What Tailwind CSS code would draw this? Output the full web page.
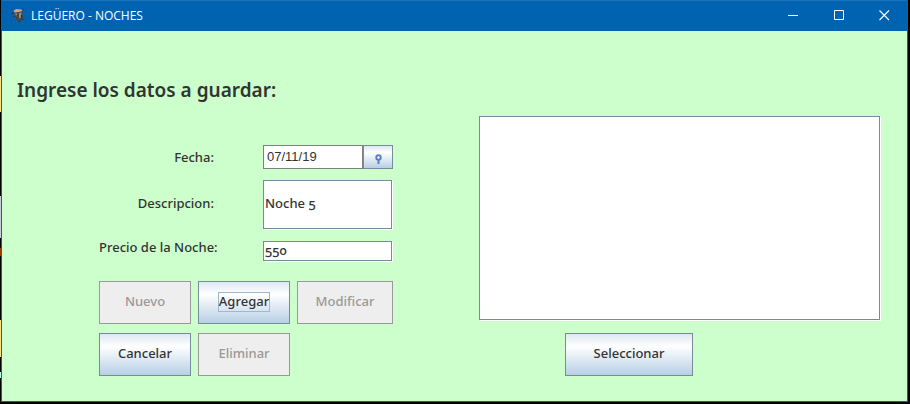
<!DOCTYPE html>
<html lang="es">
<head>
<meta charset="utf-8">
<meta name="viewport" content="width=device-width, initial-scale=1">
<title>LEGÜERO - NOCHES</title>
<script src="https://cdn.jsdelivr.net/npm/@tailwindcss/browser@4"></script>
</head>
<body class="min-h-screen flex bg-black pr-[2px] pb-[2px] font-['Noto_Sans','Open_Sans',sans-serif] text-[#333333]">
<!-- Desktop strip seen beside the window -->
<div class="w-px shrink-0 bg-[linear-gradient(to_bottom,#000_76px,#ffe08a_76px,#ffe08a_112px,#000_112px,#000_196px,#c8cedc_196px,#c8cedc_238px,#000_238px,#000_248px,#a04000_248px,#a04000_256px,#000_256px,#000_320px,#ffe08a_320px,#ffe08a_357px,#000_357px,#000_372px,#b0ffe8_372px,#b0ffe8_378px,#000_378px)]"></div>
<div class="flex-1 flex flex-col border border-t-0 border-[#0a62a8] bg-[#ccffcc]">
  <header class="flex h-[31px] items-center bg-[#0063b1] border-t border-[#1a72b8] pl-2 text-white">
    <svg class="size-4 shrink-0" viewBox="0 0 16 16" aria-hidden="true">
      <path d="M3 2 6 1l6 0 1 2-1 3 1 3-1 3-4 1-2-2-1-4-2-2z" fill="#4b4542"/>
      <path d="M3.500 2.500l3-1.500 5 .5 1 1.500-3.500 1-4.500.5z" fill="#b9aaa0"/>
      <path d="M5 5l2 .5.5 4-1 0zM9 5l2.500-.5-.5 5-2 1z" fill="#9b8a80"/>
      <path d="M6.500 7h1v3h-1zM11 7h1v3h-1z" fill="#2d2928"/>
      <path d="M1 1h1v1H1zM1 5h2v1H1zM3 8h2v1H3zM8 13h2v1H8zM12 11h2v1h-2zM13 1h1v1h-1z" fill="#3b3534"/>
    </svg>
    <h1 class="ml-[5px] flex-1 font-['Open_Sans','Noto_Sans',sans-serif] text-[12px] leading-4">LEGÜERO - NOCHES</h1>
    <button type="button" aria-label="Minimizar" class="flex h-full w-[45px] items-center justify-center"><svg class="size-[11px]" viewBox="0 0 11 11"><path d="M0 4.500h10" stroke="#fff" fill="none"/></svg></button>
    <button type="button" aria-label="Maximizar" class="flex h-full w-[46px] items-center justify-center pb-px"><svg class="size-[11px]" viewBox="0 0 11 11"><path d="M.5.5h9v9h-9z" stroke="#fff" fill="none"/></svg></button>
    <button type="button" aria-label="Cerrar" class="flex h-full w-[45px] items-center justify-center pb-px"><svg class="size-[11px]" viewBox="0 0 11 11"><path d="M.5.5l9.500 9.500M10 .5l-9.500 9.500" stroke="#fff" stroke-width="1.100" fill="none"/></svg></button>
  </header>
  <main class="flex-1 pt-[45px] pr-[26px] pl-[15px]">
    <h2 class="text-[19px] leading-7 font-semibold">Ingrese los datos a guardar:</h2>
    <form class="mt-3 flex items-start gap-[86px] pl-[82px] text-[13px] leading-4 font-medium">
      <div class="shrink-0 pt-[29px]">
        <div class="grid grid-cols-[115px_130px] items-center gap-x-[49px] gap-y-[11px] text-right whitespace-nowrap">
          <label for="fecha">Fecha:</label>
          <div class="flex h-6">
            <input id="fecha" type="text" value="07/11/19" class="w-[100px] border border-[#808080] bg-white px-[3px] font-['Liberation_Sans',sans-serif] text-[13px] font-normal">
            <button type="button" aria-label="Elegir fecha" class="flex flex-1 items-center justify-center border border-[#7a8a99] bg-linear-to-b from-[#dde8f3] via-white via-30% to-[#b8cfe5] pt-1">
              <svg class="h-[11px] w-[7px]" viewBox="0 0 7 11"><circle cx="3.500" cy="3.500" r="2.200" fill="#fff" stroke="#5b7fc0" stroke-width="2"/><path d="M3.500 5.500V10" stroke="#5b7fc0" stroke-width="2"/></svg>
            </button>
          </div>
          <label for="descripcion" class="pb-1">Descripcion:</label>
          <input id="descripcion" type="text" value="Noche 5" class="mb-px h-[49px] w-[129px] border border-[#7a8a99] bg-white px-px pb-1 oldstyle-nums shadow-[1px_1px_0_#fff]">
          <label for="precio" class="self-start leading-3">Precio de la Noche:</label>
          <input id="precio" type="text" value="550" class="mb-px h-[20px] w-[129px] border border-[#7a8a99] bg-white px-px pb-[2px] oldstyle-nums shadow-[1px_1px_0_#fff]">
        </div>
        <div class="mt-[19px] grid grid-cols-[92px_92px_96px] gap-x-[7px] gap-y-[9px]">
          <button type="button" disabled class="h-[43px] border border-[#999999] bg-[#eeeeee] pb-1 text-[#999999]">Nuevo</button>
          <button type="button" class="h-[43px] border border-[#7a8a99] bg-linear-to-b from-[#dde8f3] via-white via-30% to-[#b8cfe5] pb-px"><span class="inline-block border border-[#a3b8cc] pb-[2px]">Agregar</span></button>
          <button type="button" disabled class="h-[43px] border border-[#999999] bg-[#eeeeee] pb-1 text-[#999999]">Modificar</button>
          <button type="button" class="h-[43px] border border-[#7a8a99] bg-linear-to-b from-[#dde8f3] via-white via-30% to-[#b8cfe5] pb-1">Cancelar</button>
          <button type="button" disabled class="h-[43px] border border-[#999999] bg-[#eeeeee] pb-1 text-[#999999]">Eliminar</button>
        </div>
      </div>
      <div class="flex flex-1 flex-col items-start gap-[13px] pr-px">
        <select multiple aria-label="Noches" class="h-[204px] w-full appearance-none border border-[#7a8a99] bg-white shadow-[1px_1px_0_#fff]"></select>
        <button type="button" class="ml-[86px] h-[43px] w-[128px] border border-[#7a8a99] bg-linear-to-b from-[#dde8f3] via-white via-30% to-[#b8cfe5] pb-1">Seleccionar</button>
      </div>
    </form>
  </main>
</div>
</body>
</html>
